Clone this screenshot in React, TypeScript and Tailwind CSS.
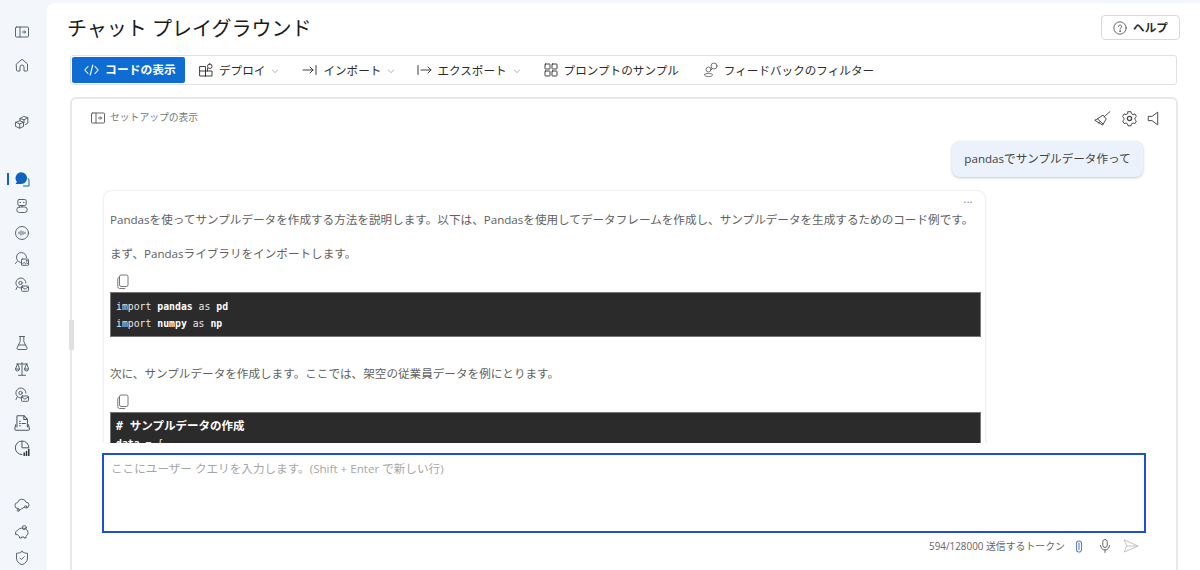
const sans = { fontFamily: '"Open Sans", "Noto Sans CJK JP", sans-serif' };
const mono = { fontFamily: '"DejaVu Sans Mono", "Noto Sans CJK JP", monospace' };

function Ico({ size = 16, className = '', children }: { size?: number; className?: string; children: React.ReactNode }) {
  return (
    <svg width={size} height={size} viewBox="0 0 16 16" fill="none" stroke="currentColor" strokeWidth="0.9" strokeLinecap="round" strokeLinejoin="round" className={`shrink-0 ${className}`}>
      {children}
    </svg>
  );
}

const PanelIcon = () => (
  <Ico>
    <rect x="1.5" y="3" width="13" height="10" rx="1" />
    <path d="M6 3v10M8.5 8h3M10.2 6.6 11.6 8l-1.4 1.4" />
  </Ico>
);

const sideIcons: { mt: string; active?: boolean; icon: React.ReactNode }[] = [
  { mt: 'mt-[24px]', icon: <PanelIcon /> },
  { mt: 'mt-[17px]', icon: <Ico><path d="M2.5 7 8 2.2 13.5 7v6.3a.7.7 0 0 1-.7.7H10V10a2 2 0 0 0-4 0v4H3.2a.7.7 0 0 1-.7-.7z" /></Ico> },
  { mt: 'mt-[41px]', icon: <Ico><path d="M1.8 8.3 5.7 6.8l3.8 1.5v4.2l-3.8 1.7-3.9-1.7zM1.8 8.3l3.9 1.6 3.8-1.6M5.7 9.9v4.3" /><path d="M6 4.6 9.6 2.4l4.2 1.3v5.5l-2.6 1.4M6 4.6v2M6.2 4.6l3.8 1.2 3.8-2.1M10 5.8v2.8" /></Ico> },
  {
    mt: 'mt-[41px]',
    active: true,
    icon: (
      <svg width="16" height="16" viewBox="0 0 16 16" className="shrink-0">
        <path d="M7.2 1.2a5.9 5.9 0 0 1 5.9 5.9 5.9 5.9 0 0 1-5.9 5.9H1.6l1.3-2.2a5.9 5.9 0 0 1 4.3-9.6z" fill="#0f62be" />
        <path d="M14.3 7.5c.5.7.7 1.6.7 2.5v5H9.5" fill="none" stroke="#0f62be" strokeWidth="1" strokeLinecap="round" />
      </svg>
    ),
  },
  { mt: 'mt-[11px]', icon: <Ico><rect x="3.8" y="1.5" width="8.4" height="6" rx="1.4" /><path d="M6.2 4.4h.01M9.8 4.4h.01" strokeWidth="1.4" /><path d="M8 7.5v1.2" /><rect x="2.8" y="9" width="10.4" height="5.5" rx="2.6" /></Ico> },
  { mt: 'mt-[11px]', icon: <Ico><circle cx="8" cy="8" r="6.5" /><path d="M5 7v2M7 5.8v4.4M9 6.5v3M11 7.2v1.6" /></Ico> },
  { mt: 'mt-[10px]', icon: <Ico><path d="M6.5 11.5a5 5 0 1 1 6-5" /><path d="M1.5 12.6 3 10.5" /><rect x="7.5" y="8" width="7" height="6.3" rx=".8" /><path d="m7.8 13.6 2.2-2.3 1.6 1.4 1.2-1 1.6 1.6" /><circle cx="12.6" cy="9.8" r=".5" /></Ico> },
  { mt: 'mt-[10px]', icon: <Ico><path d="M6.5 11a5 5 0 1 1 5.4-5" /><path d="M2 12.6 3.2 10" /><circle cx="6.5" cy="6" r="1.7" /><rect x="7.5" y="9" width="7" height="5.3" rx="1" /><path d="m7.8 10 3.2 2.2L14.2 10" /></Ico> },
  { mt: 'mt-[42px]', icon: <Ico><path d="M5.5 1.5h5M6.2 1.5v5L3 13a1 1 0 0 0 .9 1.5h8.2A1 1 0 0 0 13 13L9.8 6.5v-5M4.8 10h6.4" /></Ico> },
  { mt: 'mt-[10px]', icon: <Ico><path d="M8 1.5V14M4.5 14.3h7M2.8 3h10.4M3.5 3 1.5 8a2 2 0 0 0 4 0zM12.5 3l-2 5a2 2 0 0 0 4 0zM1.6 8h3.8M10.6 8h3.8" /></Ico> },
  { mt: 'mt-[10px]', icon: <Ico><path d="M6.5 11a5 5 0 1 1 5.4-5" /><path d="M2 12.6 3.2 10" /><circle cx="6.5" cy="6" r="1.7" /><rect x="7.5" y="9" width="7" height="5.3" rx="1" /><path d="m7.8 10 3.2 2.2L14.2 10" /></Ico> },
  { mt: 'mt-[12px]', icon: <Ico size={18}><path d="M3.5 11.5V2.2a.7.7 0 0 1 .7-.7h5.6l3 3.2v6.8" /><path d="M9.6 1.7v3.2h3" /><path d="M5.8 6.5h.8M5.8 8.5h.8M5.8 10.5h.8M8 8.5h3" /><path d="M2.4 9.5 1.6 13a1.2 1.2 0 0 0 1.2 1.5h10.6a1.2 1.2 0 0 0 1.2-1.5l-.9-3.5" /></Ico> },
  {
    mt: 'mt-[9px]',
    icon: (
      <svg width="18" height="18" viewBox="0 0 18 18" fill="none" className="shrink-0">
        <path d="M9 2a6.8 6.8 0 1 0 .3 13.6M9 2v6.8h6.8A6.8 6.8 0 0 0 9 2z" stroke="currentColor" strokeWidth="1" />
        <path d="M10.5 13.5h1.4V17h-1.4zM12.8 12h1.4v5h-1.4zM15.1 9.8h1.4V17h-1.4z" fill="#1f2937" />
      </svg>
    ),
  },
  { mt: 'mt-[41px]', icon: <Ico><path d="M4.5 11.5h-.3a3 3 0 0 1-.5-6 4.3 4.3 0 0 1 8.3-.3 3 3 0 0 1 .8 5.9" /><path d="M5.2 13.2 10.8 10" /><circle cx="4.3" cy="13.3" r="1.1" /><circle cx="11.7" cy="9.8" r="1.1" /></Ico> },
  { mt: 'mt-[11px]', icon: <Ico><path d="M2 7.5 3.8 6.2A5 5 0 0 1 7 4.2h2.5a4.5 4.5 0 0 1 4.5 4.5 4.4 4.4 0 0 1-2 3.6V14h-2v-1H7.5v1h-2v-1.5A4 4 0 0 1 3.6 10.6H2z" /><circle cx="10.3" cy="3.6" r="2" /></Ico> },
  { mt: 'mt-[10px]', icon: <Ico><path d="M8 1.5c1.6 1.2 3.5 1.8 5.5 1.8V8c0 3.5-2.3 5.6-5.5 6.7C4.8 13.6 2.5 11.5 2.5 8V3.3c2 0 3.9-.6 5.5-1.8z" /><path d="m5.8 8 1.6 1.6 2.9-3" /></Ico> },
];

const Chevron = () => (
  <svg width="8" height="8" viewBox="0 0 8 8" fill="none" stroke="#9ca3af" strokeWidth="0.8" className="shrink-0 mt-[2px]">
    <path d="M1 2.8 4 5.6l3-2.8" />
  </svg>
);

function ToolButton({ icon, label, chevron, className = '' }: { icon: React.ReactNode; label: string; chevron?: boolean; className?: string }) {
  return (
    <div className={`flex items-center text-[11.6px] text-[#2b2b2b] ${className}`}>
      {icon}
      <span className="ml-[5px] pt-[1px]">{label}</span>
      {chevron && <span className="ml-[6px] flex"><Chevron /></span>}
    </div>
  );
}

const CopyIcon = () => (
  <svg width="14" height="16" viewBox="0 0 14 16" fill="none" stroke="#555" strokeWidth="0.8">
    <rect x="3.5" y="1" width="8.5" height="11.5" rx="1.6" />
    <path d="M3.5 3.2C2.4 3.4 1.8 4 1.8 5v7.5c0 1.2.8 2 2 2h5.4" />
  </svg>
);

export default function App() {
  return (
    <div className="flex h-[570px] w-[1200px] overflow-hidden bg-[#f3f6fb]" style={sans}>
      {/* left rail */}
      <nav className="flex w-[47px] shrink-0 flex-col items-center pr-[3px] text-[#4b5563]">
        {sideIcons.map((s, i) => (
          <div key={i} className={`relative flex h-4 w-4 shrink-0 items-center justify-center ${s.mt}`}>
            {s.active && <span className="absolute -left-[7px] top-[2px] h-[12px] w-[2px] bg-[#0f62be]" />}
            {s.icon}
          </div>
        ))}
      </nav>

      <main className="mt-[3px] flex min-w-0 flex-1 flex-col rounded-tl-lg bg-white pl-[23px] pr-[23px]">
        {/* header */}
        <div className="mt-[12px] flex h-[25px] shrink-0 items-center justify-between">
          <h1 className="-ml-[3px] pt-[1px] text-[20px] font-normal leading-[25px] text-[#1a1a1a]">チャット プレイグラウンド</h1>
          <button className="-mr-[3px] flex h-[25px] w-[79px] items-center justify-center gap-[6px] rounded border border-[#d9d9d9] bg-white text-[11.6px] font-semibold text-[#2b2b2b]">
            <svg width="14" height="14" viewBox="0 0 14 14" fill="none" stroke="#444" strokeWidth="0.8" strokeLinecap="round">
              <circle cx="7" cy="7" r="6.2" />
              <path d="M5.4 5.5a1.6 1.6 0 1 1 2.5 1.4c-.6.4-.9.7-.9 1.3" />
              <circle cx="7" cy="10.1" r=".35" fill="#444" />
            </svg>
            ヘルプ
          </button>
        </div>

        {/* toolbar */}
        <div className="mt-[15px] flex h-[30px] shrink-0 items-center rounded-[3px] border border-[#e1e1e1] pl-[1px]">
          <button className="flex h-[26px] w-[113px] items-center justify-center gap-[6px] rounded-[2px] bg-[#0f6cd2] pl-[3px] text-[11.8px] font-semibold text-white">
            <svg width="15" height="12" viewBox="0 0 15 12" fill="none" stroke="white" strokeWidth="1.1" strokeLinecap="round" strokeLinejoin="round">
              <path d="M4 2.5.8 6 4 9.5M11 2.5 14.2 6 11 9.5M8.8 1 6.2 11" />
            </svg>
            コードの表示
          </button>
          <ToolButton
            className="ml-[13px]"
            chevron
            label="デプロイ"
            icon={<Ico><path d="M2 4.5h5.5V14H2zM2 9h12v5H7.5M7.5 9V14M9.5 6.5V9" /><rect x="9.5" y="2" width="4.5" height="4.5" rx="2.2" /></Ico>}
          />
          <ToolButton
            className="ml-[23px]"
            chevron
            label="インポート"
            icon={<Ico><path d="M1 8h10M8 5l3 3-3 3M14 3.5v9" /></Ico>}
          />
          <ToolButton
            className="ml-[21px]"
            chevron
            label="エクスポート"
            icon={<Ico><path d="M2 3.5v9M5 8h10M12 5l3 3-3 3" /></Ico>}
          />
          <ToolButton
            className="ml-[22px]"
            label="プロンプトのサンプル"
            icon={<Ico><rect x="2" y="2" width="5" height="5" rx=".6" /><rect x="9" y="2" width="5" height="5" rx=".6" /><rect x="2" y="9" width="5" height="5" rx=".6" /><rect x="9" y="9" width="5" height="5" rx=".6" /></Ico>}
          />
          <ToolButton
            className="ml-[24px]"
            label="フィードバックのフィルター"
            icon={<Ico className="text-[#666]"><circle cx="5.5" cy="7.5" r="2.5" /><path d="M1.5 12.5c.5-1.5 7-1.5 8 0 0 1.5-1.5 2-4 2s-4-.5-4-2z" /><circle cx="11" cy="4" r="3" /><path d="m9 6.5-.8 1.4" /></Ico>}
          />
        </div>

        {/* playground card */}
        <section className="relative mt-[12px] flex min-h-0 flex-1 flex-col rounded-t-md border-x-2 border-t-2 border-[#e8e8e8] pl-[29px] pr-[29px] mr-[-1px]">
          {/* resize grip lying on the card's left edge */}
          <span className="absolute -left-[3px] top-[221px] h-[30px] w-[5px] bg-[#e0e0e0]" />

          <div className="flex h-[37px] shrink-0 items-center justify-between pt-[1px]">
            <div className="-ml-[11px] flex items-center gap-[4px] text-[9.8px] text-[#777]">
              <span className="text-[#555]"><PanelIcon /></span>
              セットアップの表示
            </div>
            <div className="-mr-[16px] flex items-center text-[#444]">
              <Ico size={17}><path d="M15 1.5 9.5 6.5M3 8.5 8.5 4.8l3 3.6-3.4 5.8L1 9.8z" /><path d="M3.2 8.2 8.3 13M5.5 11l-1.2 1.4" /></Ico>
              <Ico size={17} className="ml-[10px]"><circle cx="8" cy="8" r="2" strokeWidth="1.2" /><path d="M6.6 1.6h2.8l.4 1.8 1.5.9 1.8-.6 1.4 2.4-1.4 1.3v1.7l1.4 1.3-1.4 2.4-1.8-.6-1.5.9-.4 1.8H6.6l-.4-1.8-1.5-.9-1.8.6-1.4-2.4 1.4-1.3V7.9L1.5 6.1l1.4-2.4 1.8.6 1.5-.9z" /></Ico>
              <Ico size={17} className="ml-[8px]"><path d="M2.5 6h3.2L11 2v12L5.7 10H2.5z" /></Ico>
            </div>
          </div>

          {/* user bubble */}
          <div className="flex shrink-0 justify-end">
            <div className="mr-[4px] mt-[5px] flex h-[36px] w-[191px] items-center justify-center rounded-lg bg-[#ebf2fb] text-[11.6px] text-[#424242] shadow-[0_1px_3px_rgba(0,0,0,0.22)]">
              pandasでサンプルデータ作って
            </div>
          </div>

          {/* assistant reply, clipped by the scroll area */}
          <div className="relative mt-[13px] h-[253px] shrink-0 overflow-hidden pl-[3px] pt-[1px]">
            <div className="h-[400px] w-[881px] rounded-lg bg-white pl-[6px] pr-[4px] text-[#616161] shadow-[0_0_3px_rgba(0,0,0,0.16)]">
              <div className="absolute right-[174px] top-[3px] text-[10px] leading-[12px] tracking-[0.5px] text-[#5a6fb8]">...</div>
              <p className="whitespace-nowrap pt-[20px] text-[11.6px] leading-[18px]">Pandasを使ってサンプルデータを作成する方法を説明します。以下は、Pandasを使用してデータフレームを作成し、サンプルデータを生成するためのコード例です。</p>
              <p className="mt-[16px] text-[11.6px] leading-[18px]">まず、Pandasライブラリをインポートします。</p>
              <div className="mt-[11px] h-[16px] pl-[6px]"><CopyIcon /></div>
              <pre className="mt-[2px] h-[45px] border border-[#777] bg-[#2b2b2b] px-[5px] py-[5px] text-[9.8px] leading-[17px] text-[#e8e8e8]" style={mono}>
                <div>import <span className="font-semibold text-white">pandas</span> as <span className="font-semibold text-white">pd</span></div>
                <div>import <span className="font-semibold text-white">numpy</span> as <span className="font-semibold text-white">np</span></div>
              </pre>
              <p className="mt-[28px] text-[11.6px] leading-[18px]">次に、サンプルデータを作成します。ここでは、架空の従業員データを例にとります。</p>
              <div className="mt-[11px] h-[16px] pl-[6px]"><CopyIcon /></div>
              <pre className="mt-[2px] h-[60px] border border-[#777] bg-[#2b2b2b] px-[5px] py-[5px] text-[9.8px] leading-[17px] text-[#e8e8e8]" style={mono}>
                <div className="text-[11.5px] font-bold text-white"># サンプルデータの作成</div>
                <div><span className="font-semibold text-white">data</span> = {'{'}</div>
              </pre>
            </div>
          </div>

          {/* composer */}
          <div className="mx-[1px] mt-[10px] h-[80px] shrink-0 border-2 border-[#1d4fd7] px-[7px] py-[5px] text-[11.6px] leading-[18px] text-[#a6a6a6]">
            ここにユーザー クエリを入力します。(Shift + Enter で新しい行)
          </div>
          <div className="flex h-[26px] shrink-0 items-center justify-end gap-[10px] pr-[8px] text-[9.9px] text-[#666]">
            <span className="-mr-[4px]">594/128000 送信するトークン</span>
            <svg width="16" height="16" viewBox="0 0 16 16" fill="none" stroke="#5b7fd6" strokeWidth="1.1" strokeLinecap="round">
              <path d="M5.5 5.5a2.5 2.5 0 0 1 5 0v6a2.5 2.5 0 0 1-5 0V4.5M8 5v6.5" />
            </svg>
            <Ico className="text-[#555]"><rect x="5.8" y="1.5" width="4.4" height="8" rx="2.2" /><path d="M3.5 7.5a4.5 4.5 0 0 0 9 0M8 12v2.5" /></Ico>
            <Ico className="text-[#bdbdbd]"><path d="M1.5 2 15 8 1.5 14l2-6zM3.5 8H15" /></Ico>
          </div>
        </section>
      </main>
    </div>
  );
}
